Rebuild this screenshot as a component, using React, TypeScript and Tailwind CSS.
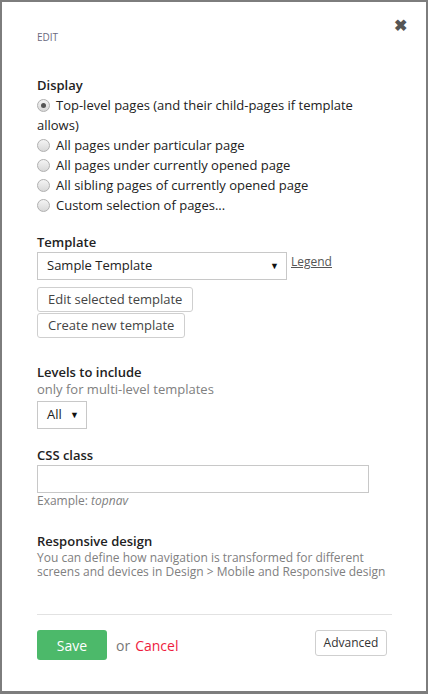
import React from "react";

function Radio({ checked }: { checked?: boolean }) {
  return (
    <span className="mr-[6px] mt-[4px] inline-flex h-[13px] w-[13px] shrink-0 items-center justify-center rounded-full border border-[#b0b0b0] bg-gradient-to-b from-[#f4f4f4] to-[#d8d8d8] align-top">
      {checked && <span className="h-[5px] w-[5px] rounded-full bg-[#555]" />}
    </span>
  );
}

function RadioRow({ label, checked }: { label: string; checked?: boolean }) {
  return (
    <div className="leading-[20px]">
      <Radio checked={checked} />
      {label}
    </div>
  );
}

export default function App() {
  return (
    <div
      className="h-[694px] w-[428px] bg-[#7d7d7d] pt-[2px] pl-[2px] pr-[2px] pb-[3px]"
      style={{ fontFamily: '"Open Sans", "Liberation Sans", sans-serif' }}
    >
      <div className="relative h-full bg-white pl-[35px] pr-[34px] pt-[28px] text-[13px] text-[#222]">
        <span className="absolute right-[19px] top-[15px] text-[16px] font-bold leading-[16px] text-[#555]">✖</span>
        <div className="text-[10px] leading-[14px] text-[#6b6a80]">EDIT</div>

        <div className="mt-[31px] font-semibold leading-[20px]">Display</div>
        <div className="flex flex-col">
          <RadioRow checked label="Top-level pages (and their child-pages if template allows)" />
          <RadioRow label="All pages under particular page" />
          <RadioRow label="All pages under currently opened page" />
          <RadioRow label="All sibling pages of currently opened page" />
          <RadioRow label="Custom selection of pages..." />
        </div>

        <div className="mt-[17px] font-semibold leading-[20px]">Template</div>
        <div className="flex items-start">
          <div className="flex h-[28px] w-[250px] items-center justify-between border border-[#c8c8c8] pl-[9px] pr-[7px]">
            <span>Sample Template</span>
            <span className="text-[9px] text-[#111]">▼</span>
          </div>
          <span className="ml-[4px] mt-[1px] text-[12px] leading-[17px] text-[#555] underline">Legend</span>
        </div>
        <div className="mt-[7px] flex flex-col items-start gap-[1px]">
          <div className="flex h-[25px] items-center rounded-[3px] border border-[#cfcfcf] px-[10px] text-[#444]">
            Edit selected template
          </div>
          <div className="flex h-[25px] items-center rounded-[3px] border border-[#cfcfcf] px-[10px] text-[#444]">
            Create new template
          </div>
        </div>

        <div className="mt-[25px] font-semibold leading-[18px]">Levels to include</div>
        <div className="leading-[17px] text-[#808080]">only for multi-level templates</div>
        <div className="mt-[3px] flex h-[28px] w-[50px] items-center justify-between border border-[#c8c8c8] pl-[9px] pr-[7px]">
          <span>All</span>
          <span className="text-[9px] text-[#111]">▼</span>
        </div>

        <div className="mt-[16px] font-semibold leading-[20px]">CSS class</div>
        <div className="h-[28px] w-[332px] border border-[#c8c8c8]" />
        <div className="text-[12px] leading-[16px] text-[#808080]">
          Example: <i>topnav</i>
        </div>

        <div className="mt-[22px] font-semibold leading-[20px]">Responsive design</div>
        <div className="text-[12px] leading-[14px] text-[#808080]">
          <div>You can define how navigation is transformed for different</div>
          <div>screens and devices in Design &gt; Mobile and Responsive design</div>
        </div>

        <div className="mt-[35px] h-px bg-[#e2e2e2]" />

        <div className="mt-[15px] flex items-start justify-between pr-[5px]">
          <div className="flex items-center">
            <div className="flex h-[30px] w-[70px] items-center justify-center rounded-[3px] bg-[#4cb96a] text-[14px] text-white">
              Save
            </div>
            <span className="ml-[9px] text-[14px] text-[#777]">or</span>
            <span className="ml-[5px] text-[14px] text-[#ee1c3e]">Cancel</span>
          </div>
          <div className="flex h-[26px] w-[72px] items-center justify-center rounded-[3px] border border-[#cfcfcf] text-[12px] text-[#333]">
            Advanced
          </div>
        </div>
      </div>
    </div>
  );
}
